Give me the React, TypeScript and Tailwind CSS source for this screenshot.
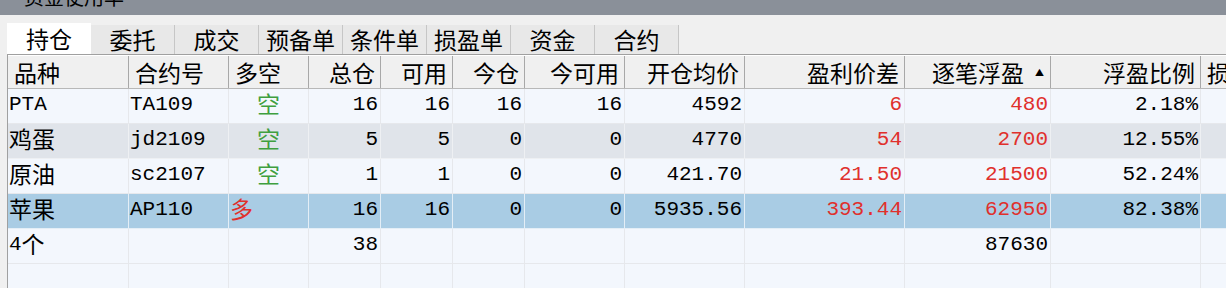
import React from 'react'

type Cell = { text: string; color?: string; align?: 'left' | 'right' | 'center' }

const cols = [
  { title: '品种', w: 'w-[121px]', align: 'left' },
  { title: '合约号', w: 'w-[100px]', align: 'left' },
  { title: '多空', w: 'w-[80px]', align: 'left' },
  { title: '总仓', w: 'w-[72px]', align: 'right' },
  { title: '可用', w: 'w-[72px]', align: 'right' },
  { title: '今仓', w: 'w-[72px]', align: 'right' },
  { title: '今可用', w: 'w-[100px]', align: 'right' },
  { title: '开仓均价', w: 'w-[120px]', align: 'right' },
  { title: '盈利价差', w: 'w-[160px]', align: 'right' },
  { title: '逐笔浮盈', w: 'w-[146px]', align: 'right' },
  { title: '浮盈比例', w: 'w-[150px]', align: 'right' },
  { title: '损', w: 'w-[120px]', align: 'left' },
]

const red = 'text-[#e0302c]'
const green = 'text-[#3f9f3f]'

const rows: { bg: string; line: string; cells: Cell[] }[] = [
  {
    bg: 'bg-[#f3f7fd]',
    line: 'border-[#e6e8ec]',
    cells: [
      { text: 'PTA' }, { text: 'TA109' }, { text: '空', color: green, align: 'center' },
      { text: '16' }, { text: '16' }, { text: '16' }, { text: '16' }, { text: '4592' },
      { text: '6', color: red }, { text: '480', color: red }, { text: '2.18%' }, { text: '' },
    ],
  },
  {
    bg: 'bg-[#e0e4ea]',
    line: 'border-[#eef0f3]',
    cells: [
      { text: '鸡蛋' }, { text: 'jd2109' }, { text: '空', color: green, align: 'center' },
      { text: '5' }, { text: '5' }, { text: '0' }, { text: '0' }, { text: '4770' },
      { text: '54', color: red }, { text: '2700', color: red }, { text: '12.55%' }, { text: '' },
    ],
  },
  {
    bg: 'bg-[#f3f7fd]',
    line: 'border-[#e6e8ec]',
    cells: [
      { text: '原油' }, { text: 'sc2107' }, { text: '空', color: green, align: 'center' },
      { text: '1' }, { text: '1' }, { text: '0' }, { text: '0' }, { text: '421.70' },
      { text: '21.50', color: red }, { text: '21500', color: red }, { text: '52.24%' }, { text: '' },
    ],
  },
  {
    bg: 'bg-[#a9cce4]',
    line: 'border-[#e4eef6]',
    cells: [
      { text: '苹果' }, { text: 'AP110' }, { text: '多', color: red, align: 'left' },
      { text: '16' }, { text: '16' }, { text: '0' }, { text: '0' }, { text: '5935.56' },
      { text: '393.44', color: red }, { text: '62950', color: red }, { text: '82.38%' }, { text: '' },
    ],
  },
  {
    bg: 'bg-[#f3f7fd]',
    line: 'border-[#e6e8ec]',
    cells: [
      { text: '4个' }, { text: '' }, { text: '' },
      { text: '38' }, { text: '' }, { text: '' }, { text: '' }, { text: '' },
      { text: '' }, { text: '87630' }, { text: '' }, { text: '' },
    ],
  },
  {
    bg: 'bg-[#f3f7fd]',
    line: 'border-[#e6e8ec]',
    cells: cols.map(() => ({ text: '' })),
  },
]

const tabs = ['持仓', '委托', '成交', '预备单', '条件单', '损盈单', '资金', '合约']

// CJK glyphs render a bit larger than the latin mono digits in the original grid
function CellText({ text }: { text: string }) {
  const parts = text.split(/([\u4e00-\u9fff]+)/).filter(Boolean)
  return (
    <>
      {parts.map((p, i) =>
        /[\u4e00-\u9fff]/.test(p) ? (
          <span key={i} className="text-[23px] leading-none mb-[3px] font-['Noto_Sans_CJK_SC',sans-serif]">
            {p}
          </span>
        ) : (
          <span key={i}>{p}</span>
        )
      )}
    </>
  )
}

export default function App() {
  return (
    <div className="w-[1226px] h-[288px] overflow-hidden bg-[#f0f0f0] font-['Noto_Sans_CJK_SC',sans-serif]">
      {/* title bar, mostly scrolled off */}
      <div className="h-[15px] bg-[#8a9099] overflow-hidden">
        <div className="-mt-[15px] pl-[24px] text-[20px] leading-[24px] text-black">资金使用率</div>
      </div>

      {/* Tabs */}
      <div className="pt-[8px] pl-[7px] flex items-end h-[39px]">
        {tabs.map((t, i) =>
          i === 0 ? (
            <div key={t} className="w-[84px] h-[31px] bg-white flex items-center justify-center text-[23px] leading-none text-black">
              {t}
            </div>
          ) : (
            <div
              key={t}
              className="w-[84px] h-[29px] bg-[#e8e8e8] border-r border-[#c6c6c6] flex items-center justify-center text-[23px] leading-none text-black"
            >
              {t}
            </div>
          )
        )}
      </div>

      {/* Table */}
      <div className="ml-[7px] border-t border-l border-[#a0a0a0]">
        <div className="flex h-[34px] bg-[#f0f0f0] border-b border-[#b8b8b8] border-t border-t-white">
          {cols.map((c, i) => (
            <div
              key={i}
              className={`${c.w} shrink-0 h-full flex items-center border-r border-[#a8a8a8] text-[23px] text-black leading-none ${
                c.align === 'right' ? 'justify-end pr-[5px]' : 'justify-start pl-[6px]'
              }`}
            >
              <span>{c.title}</span>
              {c.title === '逐笔浮盈' && <span className="ml-[11px] mr-[1px] text-[9px] leading-none">▲</span>}
            </div>
          ))}
        </div>
        {rows.map((r, ri) => (
          <div key={ri} className={`flex h-[35px] ${r.bg} border-b ${r.line}`}>
            {r.cells.map((c, ci) => {
              const align = c.align ?? (cols[ci].align === 'right' ? 'right' : 'left')
              return (
                <div
                  key={ci}
                  className={`${cols[ci].w} shrink-0 h-full flex items-center pb-[3px] border-r ${r.line} font-['Liberation_Mono','Noto_Sans_CJK_SC',monospace] text-[21px] leading-none whitespace-nowrap ${
                    c.color ?? 'text-black'
                  } ${
                    align === 'right' ? 'justify-end pr-[2px]' : align === 'center' ? 'justify-center' : 'justify-start pl-[1px]'
                  }`}
                >
                  <CellText text={c.text} />
                </div>
              )
            })}
          </div>
        ))}
      </div>
    </div>
  )
}
